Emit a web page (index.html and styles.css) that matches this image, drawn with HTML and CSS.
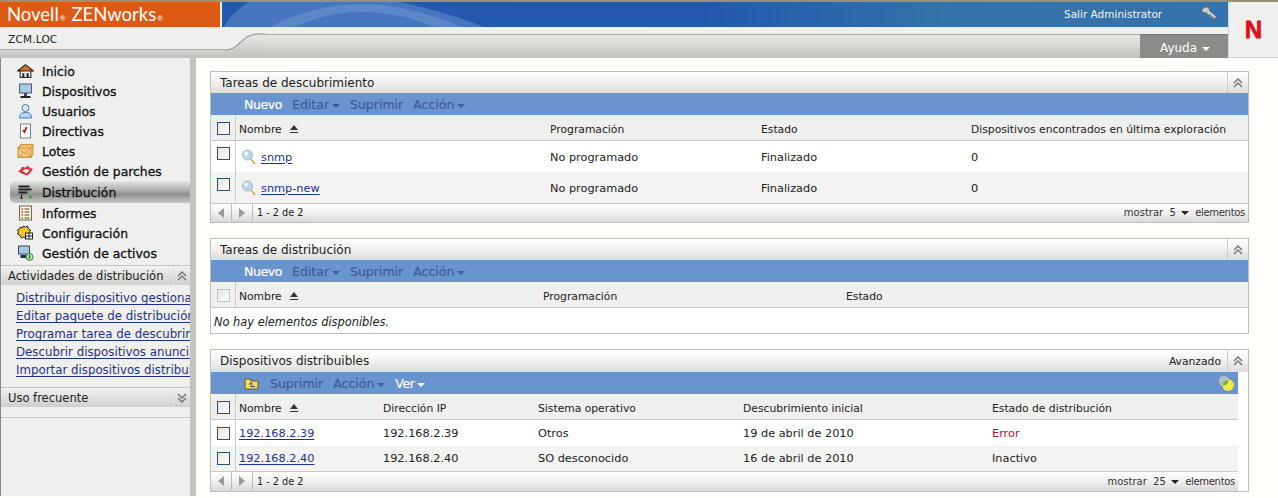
FILE: index.html
```html
<!DOCTYPE html>
<html lang="es">
<head>
<meta charset="utf-8">
<title>ZENworks</title>
<link rel="stylesheet" href="styles.css">
</head>
<body>
<svg width="0" height="0" class="defs">
  <defs><linearGradient id="band" x1="0" y1="0" x2="0" y2="1"><stop offset="0" stop-color="#e8e8e4"/><stop offset="1" stop-color="#c0c1bc"/></linearGradient></defs>
  <symbol id="dbl-up" viewBox="0 0 12 12"><path d="M2 6l4-4 4 4M2 10l4-4 4 4" fill="none" stroke="#777" stroke-width="1.5"/></symbol>
  <symbol id="dbl-down" viewBox="0 0 12 12"><path d="M2 2l4 4 4-4M2 6l4 4 4-4" fill="none" stroke="#777" stroke-width="1.5"/></symbol>
  <symbol id="lens" viewBox="0 0 16 16"><path d="M9 9l5 6" stroke="#c9a868" stroke-width="1.6"/><circle cx="6.5" cy="6" r="5" fill="#bcd8ea" stroke="#9dbdd2"/><circle cx="5" cy="4.5" r="2" fill="#eef7fb"/></symbol>
</svg>
<header class="top">
  <div class="top-main">
    <div class="band">
      <div class="brand">Novell<small>®</small> ZENworks<small>®</small></div>
      <div class="blue">
        <svg class="swoosh" width="270" height="25" viewBox="0 0 270 25"><path d="M2 25C8 14 16 6 28 0H178C215 8 240 16 262 25z" fill="#4775c0"/><path d="M48 25C80 8 115 1 150 2C180 4 215 14 240 25H212C190 15 165 10 140 10C115 10 95 15 72 25z" fill="#5c88c8"/></svg>
        <span class="exit">Salir Administrator</span>
        <svg class="key" width="16" height="14" viewBox="0 0 16 14"><path d="M1 3l3-2h3l2 3-1 3H4L1 6z" fill="#c9cbc8" stroke="#666"/><path d="M7 6l7 6" stroke="#d8d8d6" stroke-width="3"/><path d="M8 8l6 5" stroke="#555"/></svg>
      </div>
    </div>
    <div class="sub">
      <div class="zone">ZCM.LOC</div>
      <div class="sub-bar">
        <svg class="curve" width="40" height="31" viewBox="0 0 40 31"><path d="M0 23C16 23 15 7 34 7H40V31H0z" fill="url(#band)"/><path d="M0 23C16 23 15 7 34 7H40" fill="none" stroke="#a6a7a2" stroke-width="1.5"/></svg>
        <div class="sub-fill"></div>
        <div class="help">Ayuda <i class="caret caret-white"></i></div>
      </div>
    </div>
  </div>
  <div class="logo">N</div>
</header>
<div class="page">
  <aside class="side">
    <nav class="nav">
      <a class="nav-item"><svg class="nav-ic" viewBox="0 0 16 14"><rect x="3" y="6" width="10" height="7" fill="#fff" stroke="#222"/><path d="M.5 7L8 1l7.500 6z" fill="#d8701f" stroke="#222"/><rect x="5" y="9" width="2" height="4" fill="#222"/><rect x="9" y="9" width="2" height="4" fill="#222"/></svg>Inicio</a>
      <a class="nav-item"><svg class="nav-ic" viewBox="0 0 16 16"><rect x="2" y="1" width="12" height="9" fill="#a9c8e4" stroke="#4a6078"/><rect x="6.500" y="10" width="3" height="3" fill="#445"/><rect x="3" y="13" width="10" height="2" fill="#222"/></svg>Dispositivos</a>
      <a class="nav-item"><svg class="nav-ic" viewBox="0 0 16 16"><circle cx="8" cy="5" r="3.500" fill="#dbe8f5" stroke="#4a7db8"/><path d="M2 15c0-4 2-5 4-5.500h4c2 .5 4 1.500 4 5.500z" fill="#b8d3ee" stroke="#4a7db8"/></svg>Usuarios</a>
      <a class="nav-item"><svg class="nav-ic" viewBox="0 0 16 16"><rect x="3" y="1" width="10" height="14" fill="#fff" stroke="#7a8294"/><path d="M5.500 7l1.500 2 2-5" fill="none" stroke="#c11" stroke-width="1.800"/></svg>Directivas</a>
      <a class="nav-item"><svg class="nav-ic" viewBox="0 0 16 14"><path d="M1 4l3-3h11v9l-2 3H1z" fill="#f6c77e" stroke="#cf9135"/><path d="M1 4h12v9M13 4l2-3M1 4l6 5 6-5M1 13l5-5M13 13l-5-5" fill="none" stroke="#cf9135" stroke-width=".8"/></svg>Lotes</a>
      <a class="nav-item"><svg class="nav-ic" viewBox="0 0 16 12"><path d="M1 6l2-1 2-3 3 1 2-2 2 2 3 1-2 3-3 3-4-1-2-1z" fill="#dd3038"/><path d="M5 6l3-2 4 1-3 3z" fill="#fff"/></svg>Gestión de parches</a>
      <a class="nav-item nav-active"><svg class="nav-ic" viewBox="0 0 16 16"><path d="M1 2.500h11M1 5.500h13M1 8.500h9" stroke="#222" stroke-width="1.800"/><path d="M4 10v5M3 13.500l1 1.500 1-1.500" stroke="#222" fill="none"/><path d="M13 11l2 2-2 2-2-2z" fill="#2fa84a"/></svg>Distribución</a>
      <a class="nav-item"><svg class="nav-ic" viewBox="0 0 16 16"><rect x="2" y="1" width="12" height="14" fill="#fff6d8" stroke="#6a6a50"/><path d="M7 4h5M7 7h5M7 10h5M7 13h5" stroke="#444"/><path d="M4 4h1.500M4 7h1.500M4 10h1.500M4 13h1.500" stroke="#c33" stroke-width="1.500"/></svg>Informes</a>
      <a class="nav-item"><svg class="nav-ic" viewBox="0 0 16 16"><path d="M3 2l2 1 1-2 2 1 2-1 1 3 2 1-1 2 1 2-2 1-2 3-3-1-2 1-2-3-2-1 1-2-1-2 2-1z" fill="#f0c42c" stroke="#222"/><rect x="8" y="8" width="7" height="6" fill="#fff" stroke="#222"/><path d="M11.500 8v6M8 11h7" stroke="#222"/></svg>Configuración</a>
      <a class="nav-item"><svg class="nav-ic" viewBox="0 0 16 16"><rect x="1" y="1" width="11" height="8" fill="#a9c8e4" stroke="#345"/><path d="M3 10h6v3H3z" fill="#234"/><circle cx="12" cy="12" r="3.500" fill="#bfe2bf" stroke="#3a8a4a"/><path d="M12 9.500v5M13 10.800h-1.600v1.200h1.200v1.200H11" fill="none" stroke="#2a7a3a" stroke-width=".7"/></svg>Gestión de activos</a>
    </nav>
    <div class="side-head side-head-first"><span>Actividades de distribución</span><span class="side-tog"><svg class="tog-ic"><use href="#dbl-up"/></svg></span></div>
    <div class="side-links">
      <a>Distribuir dispositivo gestionado</a>
      <a>Editar paquete de distribución</a>
      <a>Programar tarea de descubrimiento</a>
      <a>Descubrir dispositivos anunciados</a>
      <a>Importar dispositivos distribuibles</a>
    </div>
    <div class="side-head"><span>Uso frecuente</span><span class="side-tog"><svg class="tog-ic"><use href="#dbl-down"/></svg></span></div>
    <div class="side-rule"></div>
  </aside>
  <div class="gutter"></div>
  <main class="main">
    <section class="panel">
      <div class="p-title"><span class="p-name">Tareas de descubrimiento</span><span class="p-tog"><svg class="tog-ic"><use href="#dbl-up"/></svg></span></div>
      <div class="bar"><b class="act-on">Nuevo</b><span class="act">Editar <i class="caret caret-dark"></i></span><span class="act">Suprimir</span><span class="act">Acción <i class="caret caret-dark"></i></span></div>
      <div class="row head cols-a"><span class="ck"><i class="box"></i></span><span class="cell">Nombre <i class="sort"></i></span><span>Programación</span><span>Estado</span><span>Dispositivos encontrados en última exploración</span></div>
      <div class="row tall cols-a"><span class="ck"><i class="box"></i></span><span class="cell cell-ic"><svg class="lens"><use href="#lens"/></svg><a>snmp</a></span><span>No programado</span><span>Finalizado</span><span>0</span></div>
      <div class="row tall alt cols-a"><span class="ck"><i class="box"></i></span><span class="cell cell-ic"><svg class="lens"><use href="#lens"/></svg><a>snmp-new</a></span><span>No programado</span><span>Finalizado</span><span>0</span></div>
      <div class="foot"><span class="pg"><i class="tri-l"></i></span><span class="pg"><i class="tri-r"></i></span><span class="count">1 - 2 de 2</span><span class="show">mostrar <b>5</b> <i class="caret caret-black"></i> <span class="el">elementos</span></span></div>
    </section>
    <section class="panel">
      <div class="p-title"><span class="p-name">Tareas de distribución</span><span class="p-tog"><svg class="tog-ic"><use href="#dbl-up"/></svg></span></div>
      <div class="bar"><b class="act-on">Nuevo</b><span class="act">Editar <i class="caret caret-dark"></i></span><span class="act">Suprimir</span><span class="act">Acción <i class="caret caret-dark"></i></span></div>
      <div class="row head cols-b"><span class="ck"><i class="box box-off"></i></span><span class="cell">Nombre <i class="sort"></i></span><span>Programación</span><span>Estado</span></div>
      <div class="empty">No hay elementos disponibles.</div>
    </section>
    <section class="panel panel-narrow">
      <div class="p-title"><span class="p-name">Dispositivos distribuibles</span><span class="p-adv">Avanzado</span><span class="p-tog"><svg class="tog-ic"><use href="#dbl-up"/></svg></span></div>
      <div class="body-narrow">
        <div class="bar bar-c"><svg class="folder" width="15" height="13" viewBox="0 0 15 13"><path d="M1 2h5l1 2h7v8H1z" fill="#f2dc6a" stroke="#665a1a"/><path d="M7 10V6M5 7.500l2-2 2 2M7 9.500h4" fill="none" stroke="#444"/></svg><span class="act">Suprimir</span><span class="act">Acción <i class="caret caret-dark"></i></span><b class="act-on">Ver <i class="caret caret-white"></i></b>
          <svg class="venn" width="18" height="18" viewBox="0 0 17 17"><circle cx="6.500" cy="6.500" r="5.500" fill="#a9bcd8" stroke="#7a8aa8"/><circle cx="10.500" cy="10.500" r="5.500" fill="#f0e844"/><path d="M5.500 10.500c-.5-2.500 2-5.500 5-4.500 .5 2.500-2 5.500-5 4.500z" fill="#6fb13a"/></svg></div>
        <div class="row head cols-c"><span class="ck"><i class="box"></i></span><span class="cell">Nombre <i class="sort"></i></span><span>Dirección IP</span><span>Sistema operativo</span><span>Descubrimiento inicial</span><span>Estado de distribución</span></div>
        <div class="row mid mid-first cols-c"><span class="ck"><i class="box"></i></span><span class="cell"><a>192.168.2.39</a></span><span>192.168.2.39</span><span>Otros</span><span>19 de abril de 2010</span><span class="err">Error</span></div>
        <div class="row mid alt cols-c"><span class="ck"><i class="box"></i></span><span class="cell"><a>192.168.2.40</a></span><span>192.168.2.40</span><span>SO desconocido</span><span>16 de abril de 2010</span><span>Inactivo</span></div>
        <div class="foot foot-c"><span class="pg"><i class="tri-l"></i></span><span class="pg"><i class="tri-r"></i></span><span class="count">1 - 2 de 2</span><span class="show">mostrar <b>25</b> <i class="caret caret-black"></i> <span class="el">elementos</span></span></div>
      </div>
    </section>
  </main>
</div>
</body>
</html>
```
FILE: styles.css
```css
* { box-sizing: border-box; }
html, body { margin: 0; height: 100%; overflow: hidden; }
body { font-family: "DejaVu Sans", Verdana, sans-serif; font-size: 11px; color: #222; background: #fffffb; }
.defs { position: absolute; }
i { font-style: normal; }

.top { display: flex; height: 58px; background: #efefed; border-top: 2px solid #9c9074; }
.top-main { flex: 1; display: flex; flex-direction: column; min-width: 0; }
.band { display: flex; height: 25px; }
.brand { width: 220px; background: #dd5a14; color: #fff; font-family: Lato, "Open Sans", sans-serif; font-size: 18.500px; line-height: 24px; padding-left: 7px; white-space: nowrap; }
.brand small { font-size: 7px; margin: 0 1px; }
.blue { flex: 1; margin-left: 2px; background: linear-gradient(90deg, #2559ae 0, #2458ae 48%, #3473a9 72%, #3672ab); position: relative; overflow: hidden; }
.swoosh { position: absolute; left: 0; top: 0; }
.exit { position: absolute; left: 842px; top: 6px; color: #f4f6f8; font-size: 10.500px; }
.key { position: absolute; left: 979px; top: 4px; }
.sub { flex: 1; display: flex; }
.zone { width: 225px; padding: 6px 0 0 8px; font-size: 10.500px; letter-spacing: .2px; background: linear-gradient(#efefed 0 22px, #a6a7a2 22px 23px, #d2d3ce 23px, #c0c1bc); }
.sub-bar { flex: 1; display: flex; }
.curve { flex: none; display: block; }
.sub-fill { flex: 1; margin-top: 7px; border-top: 1px solid #a6a7a2; background: linear-gradient(#e8e8e4, #c0c1bc); }
.help { width: 88px; margin-top: 7px; background: #8b8c87; color: #fff; font-size: 12px; padding: 6px 0 0 20px; border-top: 1px solid #777; }
.logo { width: 50px; border-left: 1px solid #d8d8d6; border-bottom: 1px solid #d0d0ce; color: #e0101a; font-family: "Liberation Sans", sans-serif; font-weight: 700; font-size: 24px; text-align: center; padding-top: 14px; -webkit-text-stroke: .8px #e0101a; }

.caret { display: inline-block; width: 0; height: 0; border-left: 4px solid transparent; border-right: 4px solid transparent; border-top: 4px solid; vertical-align: 1px; margin-left: 1px; }
.caret-white { color: #fff; }
.caret-dark { color: #3f5f99; }
.caret-black { color: #222; }

.page { display: flex; height: 438px; }
.side { width: 190px; flex: none; background: #efefed; border-left: 1px solid #888; overflow: hidden; white-space: nowrap; }
.gutter { width: 6px; flex: none; background: #c3c4bf; }
.nav { padding-top: 3px; }
.nav-item { display: flex; align-items: center; height: 20px; padding-left: 16px; gap: 8px; font-size: 12.400px; color: #111; -webkit-text-stroke: .3px #111; }
.nav-ic { width: 17px; height: 16px; flex: none; }
.nav-active { height: 22px; margin: 0 0 0 9px; padding-left: 7px; border-radius: 5px 0 0 5px; background: linear-gradient(#e6e6e4, #a9aaa6 45%, #8f908c 60%, #c9cac7); }
.side-head { height: 20px; display: flex; justify-content: space-between; align-items: center; padding-left: 7px; background: linear-gradient(#f2f2f0, #cfd0cc); border-top: 1px solid #c4c4c2; font-size: 11.500px; }
.side-head-first { margin-top: 2px; }
.side-tog { width: 17px; height: 100%; border-left: 1px solid #ddd; display: flex; align-items: center; justify-content: center; flex: none; }
.tog-ic { width: 12px; height: 12px; display: block; }
.side-links { padding: 5px 0 7px 15px; }
.side-links a { display: block; height: 18px; line-height: 17px; color: #1f3288; text-decoration: underline; text-underline-offset: 2px; font-size: 11.800px; }
.side-rule { height: 11px; border-bottom: 1px solid #c8c8c6; }

.main { flex: 1; padding: 13px 29px 0 14px; display: flex; flex-direction: column; gap: 15px; min-width: 0; background: #fffffb; }
.panel { border: 1px solid #bdbdbb; background: #fff; }
.p-title { height: 21px; display: flex; align-items: center; background: linear-gradient(#fff, #f4f4f2 40%, #dcdcda); }
.panel-narrow .p-title { height: 22px; }
.p-name { flex: 1; padding-left: 9px; font-size: 12px; }
.p-adv { padding-right: 6px; font-size: 10.750px; }
.p-tog { width: 21px; height: 100%; border-left: 1px solid #ccc; display: flex; align-items: center; justify-content: center; }
.bar { height: 22px; background: #6a94cd; display: flex; align-items: center; padding-left: 33px; gap: 10px; font-size: 12.500px; color: #3c5c98; }
.bar .caret { margin-left: -1px; }
.act { -webkit-text-stroke: .2px #3c5c98; }
.act-on { color: #fff; -webkit-text-stroke: .2px #fff; font-weight: 400; letter-spacing: -.4px; }
.bar-c { position: relative; }
.folder { margin-right: 1px; }
.venn { position: absolute; right: 3px; top: 2px; }

.row { display: grid; align-items: center; white-space: nowrap; background: #fff; font-size: 11.300px; }
.row > span { padding-right: 4px; }
.head { height: 26px; background: #efefed; border-bottom: 1px solid #c8c8c6; font-size: 10.750px; }
.head > span:not(.ck) { padding-top: 3px; }
.head > .ck { padding-top: 1px; }
.tall { height: 31px; }
.tall > span:not(.ck) { padding-top: 1px; }
.tall > .cell-ic { padding-top: 0; }
.tall > .ck { padding-bottom: 6px; }
.mid { height: 25px; }
.mid-first { height: 26px; }
.alt { background: #f3f3f1; }
.cols-a { grid-template-columns: 28px 311px 211px 210px 1fr; }
.cols-b { grid-template-columns: 28px 304px 303px 1fr; }
.cols-c { grid-template-columns: 28px 144px 155px 205px 249px 1fr; }
.row > .ck { height: 100%; border-right: 1px solid #ccc; display: flex; align-items: center; padding-left: 6px; padding-right: 0; width: 25px; }
.box { width: 13px; height: 13px; border: 1px solid #32506e; background: linear-gradient(135deg, #e4e4e2, #fff); display: block; }
.box-off { border-color: #c4c4c2; }
.cell { display: flex; align-items: center; }
.cell-ic { gap: 4px; padding-left: 2px; }
.lens { width: 16px; height: 16px; }
.row a { color: #1f3288; text-decoration: underline; text-underline-offset: 2px; }
.sort { display: inline-block; width: 8px; height: 8px; margin-left: 8px; background: linear-gradient(#333 0 0) bottom/100% 1px no-repeat; position: relative; }
.sort::before { content: ""; position: absolute; left: 0; top: 0; border-left: 4px solid transparent; border-right: 4px solid transparent; border-bottom: 5px solid #333; }
.err { color: #b4123c; }
.empty { height: 25px; padding: 7px 0 0 3px; font-style: italic; font-size: 11.400px; background: #fff; }

.foot { height: 19px; display: flex; align-items: center; font-size: 10px; background: linear-gradient(#fff, #f0f0ee 50%, #d8d8d6); border-top: 1px solid #c8c8c6; padding-bottom: 1px; }
.foot-c { height: 20px; }
.pg { width: 21px; height: 100%; border-right: 1px solid #bbb; display: flex; align-items: center; justify-content: center; }
.tri-l, .tri-r { width: 0; height: 0; border-top: 5px solid transparent; border-bottom: 5px solid transparent; }
.tri-l { border-right: 6px solid #999; }
.tri-r { border-left: 6px solid #999; }
.count { padding-left: 4px; flex: 1; font-size: 9.700px; }
.show { padding-right: 3px; color: #333; }
.show b { font-weight: 400; margin: 0 0 0 3px; }
.show .caret { margin: 0 3px 0 2px; }
.el { letter-spacing: -.3px; }

.body-narrow { margin-right: 10px; }
```
